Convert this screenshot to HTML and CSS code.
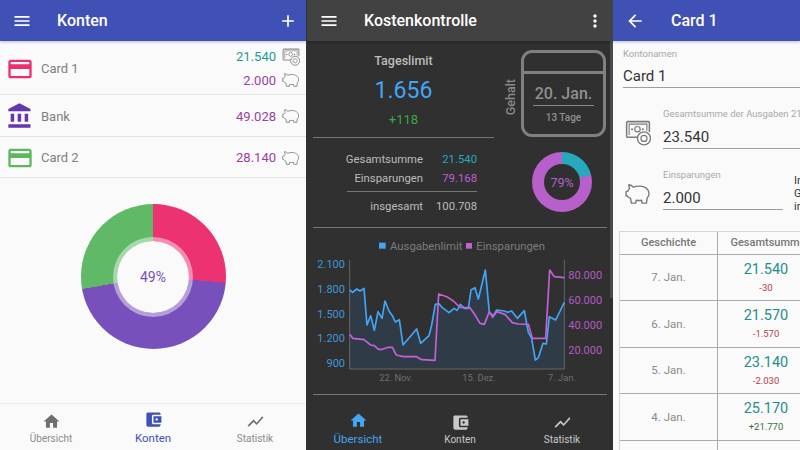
FILE: index.html
```html
<!DOCTYPE html>
<html lang="de">
<head>
  <meta charset="utf-8">
  <meta name="viewport" content="width=device-width, initial-scale=1.0">
  <title>Konten</title>
  <link rel="stylesheet" href="styles.css">
</head>
<body>
  <svg class="defs" xmlns="http://www.w3.org/2000/svg">
    <symbol id="i-menu" viewBox="0 0 24 24"><path d="M3 18h18v-2H3v2zm0-5h18v-2H3v2zm0-7v2h18V6H3z"/></symbol>
    <symbol id="i-plus" viewBox="0 0 24 24"><path d="M19 13h-6v6h-2v-6H5v-2h6V5h2v6h6v2z"/></symbol>
    <symbol id="i-more" viewBox="0 0 24 24"><path d="M12 8c1.100 0 2-.9 2-2s-.9-2-2-2-2 .9-2 2 .9 2 2 2zm0 2c-1.100 0-2 .9-2 2s.9 2 2 2 2-.9 2-2-.9-2-2-2zm0 6c-1.100 0-2 .9-2 2s.9 2 2 2 2-.9 2-2-.9-2-2-2z"/></symbol>
    <symbol id="i-back" viewBox="0 0 24 24"><path d="M20 11H7.830l5.590-5.590L12 4l-8 8 8 8 1.410-1.410L7.830 13H20v-2z"/></symbol>
    <symbol id="i-card" viewBox="0 0 24 24"><path d="M20 4H4c-1.110 0-1.990.89-1.990 2L2 18c0 1.110.89 2 2 2h16c1.110 0 2-.89 2-2V6c0-1.110-.89-2-2-2zm0 14H4v-6h16v6zm0-10H4V6h16v2z"/></symbol>
    <symbol id="i-bank" viewBox="0 0 24 24"><path d="M4 10v7h3v-7H4zm6 0v7h3v-7h-3zM2 22h19v-3H2v3zm14-12v7h3v-7h-3zm-4.500-9L2 6v2h19V6l-9.500-5z"/></symbol>
    <symbol id="i-home" viewBox="0 0 24 24"><path d="M10 20v-6h4v6h5v-8h3L12 3 2 12h3v8z"/></symbol>
    <symbol id="i-wallet" viewBox="0 0 24 24"><path d="M21 18v1c0 1.100-.9 2-2 2H5c-1.110 0-2-.9-2-2V5c0-1.100.89-2 2-2h14c1.100 0 2 .9 2 2v1h-9c-1.110 0-2 .9-2 2v8c0 1.100.89 2 2 2h9zm-9-2h10V8H12v8zm4-2.500c-.83 0-1.500-.67-1.500-1.500s.67-1.500 1.500-1.500 1.500.67 1.500 1.500-.67 1.500-1.500 1.500z"/></symbol>
    <symbol id="i-chart" viewBox="0 0 24 24"><path d="M3.500 18.490l6-6.010 4 4L22 6.920l-1.410-1.410-7.090 7.970-4-4L2 16.990z"/></symbol>
    <symbol id="i-pig" viewBox="0 0 24 20">
      <path d="M3.500 1.500c1.800.2 3.200 1 4.300 2.200C9.300 3 11 2.700 13.500 2.700c4.800 0 8.700 2.800 8.700 7 0 1.600-.7 2.900-1.700 3.800l-.7 4.900h-4l-.5-2.600c-1.700.3-3.300.3-5 0l-.5 2.600h-3.900l-.8-4.300c-1.300-.4-2.300-1.100-2.800-2.200H1V7.600h1.400c.4-1 1-1.800 1.700-2.500z" fill="none" stroke="currentColor" stroke-width="1.300" stroke-linejoin="round"/>
    </symbol>
    <symbol id="i-cash" viewBox="0 0 24 24">
      <path d="M13 16H2.500a1 1 0 0 1-1-1V2.500a1 1 0 0 1 1-1h19a1 1 0 0 1 1 1V11" fill="none" stroke="currentColor" stroke-width="1.400"/>
      <path d="M3.800 13.800V3.800h16.400V10" fill="none" stroke="currentColor" stroke-width="1"/>
      <circle cx="11.500" cy="8.500" r="2.500" fill="none" stroke="currentColor" stroke-width="1.100"/>
      <circle cx="6.500" cy="8.500" r="1" fill="currentColor"/>
      <circle cx="16.500" cy="8.500" r="1" fill="currentColor"/>
      <circle cx="17.500" cy="17" r="6" fill="#fafafa" stroke="currentColor" stroke-width="1.300"/>
      <circle cx="17.500" cy="17" r="2.800" fill="none" stroke="currentColor" stroke-width="1.100"/>
    </symbol>
  </svg>

  <div class="screens">
    <!-- Konten -->
    <section class="screen screen-accounts">
      <header class="appbar">
        <svg class="bar-icon"><use href="#i-menu"/></svg>
        <h1>Konten</h1>
        <svg class="bar-icon bar-end"><use href="#i-plus"/></svg>
      </header>
      <div class="account account-tall">
        <svg class="account-icon pink"><use href="#i-card"/></svg>
        <span class="account-name">Card 1</span>
        <div class="amounts">
          <div class="amount teal">21.540 <svg class="mini"><use href="#i-cash"/></svg></div>
          <div class="amount plum">2.000 <svg class="mini"><use href="#i-pig"/></svg></div>
        </div>
      </div>
      <div class="account">
        <svg class="account-icon violet"><use href="#i-bank"/></svg>
        <span class="account-name">Bank</span>
        <div class="amounts">
          <div class="amount plum">49.028 <svg class="mini"><use href="#i-pig"/></svg></div>
        </div>
      </div>
      <div class="account">
        <svg class="account-icon green"><use href="#i-card"/></svg>
        <span class="account-name">Card 2</span>
        <div class="amounts">
          <div class="amount plum">28.140 <svg class="mini"><use href="#i-pig"/></svg></div>
        </div>
      </div>
      <div class="donut-area">
        <div class="donut-big"><div class="donut-big-hole">49%</div></div>
      </div>
      <nav class="tabs tabs-light">
        <div class="tab"><svg><use href="#i-home"/></svg><span>Übersicht</span></div>
        <div class="tab tab-on"><svg><use href="#i-wallet"/></svg><span>Konten</span></div>
        <div class="tab"><svg><use href="#i-chart"/></svg><span>Statistik</span></div>
      </nav>
    </section>

    <!-- Kostenkontrolle -->
    <section class="screen screen-dark">
      <header class="appbar appbar-dark">
        <svg class="bar-icon"><use href="#i-menu"/></svg>
        <h1>Kostenkontrolle</h1>
        <svg class="bar-icon bar-end"><use href="#i-more"/></svg>
      </header>
      <div class="overview">
        <div class="overview-left">
          <div class="limit">
            <div class="limit-title">Tageslimit</div>
            <div class="limit-value">1.656</div>
            <div class="limit-diff">+118</div>
          </div>
          <div class="totals">
            <div class="total-row"><span>Gesamtsumme</span><b class="cyan">21.540</b></div>
            <div class="total-row"><span>Einsparungen</span><b class="orchid">79.168</b></div>
            <div class="total-row total-sum"><span>insgesamt</span><b>100.708</b></div>
          </div>
        </div>
        <div class="overview-right">
          <div class="salary">
            <span class="salary-label">Gehalt</span>
            <div class="calendar">
              <div class="calendar-top"></div>
              <div class="calendar-date">20. Jan.</div>
              <div class="calendar-days">13 Tage</div>
            </div>
          </div>
          <div class="donut-small"><div class="donut-small-hole">79%</div></div>
        </div>
      </div>
      <div class="chart-wrap">
        <svg class="chart" viewBox="6 9 918 498">
          <rect x="222" y="53" width="20" height="18" fill="#42a5f5"/>
          <text class="c-legend" x="255" y="75">Ausgabenlimit</text>
          <rect x="483" y="54" width="18" height="17" fill="#c561d6"/>
          <text class="c-legend" x="514" y="75">Einsparungen</text>

          <g class="c-left">
            <text x="120" y="130">2.100</text>
            <text x="120" y="205">1.800</text>
            <text x="120" y="279">1.500</text>
            <text x="120" y="352">1.200</text>
            <text x="120" y="426">900</text>
          </g>
          <g class="c-right">
            <text x="790" y="163">80.000</text>
            <text x="790" y="238">60.000</text>
            <text x="790" y="312">40.000</text>
            <text x="790" y="386">20.000</text>
          </g>
          <g class="c-bottom">
            <text x="273" y="469">22. Nov.</text>
            <text x="522" y="469">15. Dez.</text>
            <text x="771" y="469">7. Jan.</text>
          </g>

          <polygon class="c-area" points="134,432 134,195 143,202 155,192 165,198 177,190 186,300 197,272 208,316 219,260 231,280 240,228 252,258 262,272 271,291 283,284 294,360 335,312 347,355 372,332 380,300 391,238 402,236 412,248 432,263 447,250 456,256 466,238 478,250 490,250 498,195 510,188 520,222 541,135 553,262 565,272 575,255 598,258 608,262 620,258 637,280 658,257 670,322 680,340 691,405 700,398 714,355 724,357 733,275 752,285 778,232 778,432"/>
          <path class="c-axis" d="M134 105V432H778V105"/>
          <polyline class="c-line c-blue" points="134,195 143,202 155,192 165,198 177,190 186,300 197,272 208,316 219,260 231,280 240,228 252,258 262,272 271,291 283,284 294,360 335,312 347,355 372,332 380,300 391,238 402,236 412,248 432,263 447,250 456,256 466,238 478,250 490,250 498,195 510,188 520,222 541,135 553,262 565,272 575,255 598,258 608,262 620,258 637,280 658,257 670,322 680,340 691,405 700,398 714,355 724,357 733,275 752,285 778,232"/>
          <polyline class="c-line c-purple" points="134,328 143,340 177,344 197,360 208,362 220,373 232,373 250,367 262,367 274,390 295,395 335,395 350,404 390,406 401,207 425,215 445,228 465,247 495,248 510,270 525,295 538,298 553,260 563,277 575,260 600,268 622,293 640,297 670,298 682,340 722,340 734,135 748,155 778,158"/>
        </svg>
      </div>
      <nav class="tabs tabs-dark">
        <div class="tab tab-on"><svg><use href="#i-home"/></svg><span>Übersicht</span></div>
        <div class="tab"><svg><use href="#i-wallet"/></svg><span>Konten</span></div>
        <div class="tab"><svg><use href="#i-chart"/></svg><span>Statistik</span></div>
      </nav>
      <div class="scrollbar"></div>
    </section>

    <!-- Card 1 -->
    <section class="screen screen-detail">
      <header class="appbar">
        <svg class="bar-icon"><use href="#i-back"/></svg>
        <h1>Card 1</h1>
      </header>
      <div class="form">
        <div class="field field-name">
          <label>Kontonamen</label>
          <div class="field-value">Card 1</div>
        </div>
        <div class="form-row form-row-sum">
          <svg class="form-icon"><use href="#i-cash"/></svg>
          <div class="field field-wide">
            <label>Gesamtsumme der Ausgaben 21.540</label>
            <div class="field-value">23.540</div>
          </div>
        </div>
        <div class="form-row form-row-save">
          <svg class="form-icon"><use href="#i-pig"/></svg>
          <div class="field field-save">
            <label>Einsparungen</label>
            <div class="field-value">2.000</div>
          </div>
          <div class="form-note">In<br>Ge<br>in</div>
        </div>
      </div>
      <div class="history">
        <div class="h-head h-head-first">Geschichte</div><div class="h-head">Gesamtsumme</div>
        <div class="h-date">7. Jan.</div><div class="h-cell"><b>21.540</b><small class="neg">-30</small></div>
        <div class="h-date">6. Jan.</div><div class="h-cell"><b>21.570</b><small class="neg">-1.570</small></div>
        <div class="h-date">5. Jan.</div><div class="h-cell"><b>23.140</b><small class="neg">-2.030</small></div>
        <div class="h-date">4. Jan.</div><div class="h-cell"><b>25.170</b><small class="pos">+21.770</small></div>
        <div class="h-date"></div><div class="h-cell"></div>
      </div>
    </section>
  </div>
</body>
</html>
```

FILE: styles.css
```css
* {
  box-sizing: border-box;
  margin: 0;
  padding: 0;
}
html, body {
  width: 800px;
  height: 450px;
  overflow: hidden;
}
body {
  font-family: Roboto, "Liberation Sans", sans-serif;
  background: #333;
}
.defs {
  display: none;
}
.screens {
  display: flex;
  height: 450px;
}
.screen {
  position: relative;
  display: flex;
  flex-direction: column;
  flex: none;
  width: 306px;
  height: 450px;
  overflow: hidden;
  background: #fafafa;
}
.screen-detail {
  width: 187px;
}
.screen-dark {
  margin-left: 1px;
  background: #303030;
  color: #bdbdbd;
}

/* app bar */
.appbar {
  display: flex;
  align-items: center;
  flex: none;
  height: 41px;
  padding-left: 12px;
  background: #3f51b5;
  box-shadow: 0 1px 3px rgba(0,0,0,0.25);
  color: #fff;
  z-index: 1;
}
.appbar-dark {
  background: #424242;
}
.appbar h1 {
  margin-left: 25px;
  font-size: 16px;
  font-weight: 500;
}
.screen-detail .appbar h1 {
  margin-left: 26px;
}
.bar-icon {
  width: 20px;
  height: 20px;
  fill: #fff;
}
.bar-end {
  margin-left: auto;
  margin-right: 8px;
}

/* account list */
.account {
  display: flex;
  align-items: center;
  flex: none;
  height: 41.500px;
  padding: 2px 6px 0;
  border-bottom: 1.500px solid #e4e4e4;
}
.account-tall {
  height: 54px;
}
.account-icon {
  width: 28px;
  height: 28px;
}
.pink { fill: #ec2f6f; }
.violet { fill: #6237b0; }
.green { fill: #5cb85f; }
.account-name {
  margin-left: 7px;
  font-size: 13px;
  color: #808080;
}
.amounts {
  display: flex;
  flex-direction: column;
  gap: 5.500px;
  margin-left: auto;
}
.amount {
  display: flex;
  align-items: center;
  justify-content: flex-end;
  gap: 6px;
  height: 18px;
  font-size: 13px;
}
.teal { color: #1c9a94; }
.plum { color: #9b3fa5; }
.mini {
  width: 18px;
  height: 18px;
  color: #8c8c8c;
}

/* big donut */
.donut-area {
  display: flex;
  justify-content: center;
  flex: 1;
  padding-top: 26px;
}
.donut-big {
  display: flex;
  align-items: center;
  justify-content: center;
  width: 145px;
  height: 145px;
  border-radius: 50%;
  background: conic-gradient(#ec3270 0 95deg, #7850bb 95deg 260deg, #5fb966 260deg 360deg);
}
.donut-big-hole {
  display: flex;
  align-items: center;
  justify-content: center;
  width: 80px;
  height: 80px;
  border: 4px solid rgba(255,255,255,0.45);
  border-radius: 50%;
  background: #fafafa;
  background-clip: padding-box;
  font-size: 14px;
  color: #7850bb;
}

/* bottom tabs */
.tabs {
  display: grid;
  grid-template-columns: 1fr 1fr 1fr;
  flex: none;
  height: 47px;
  font-size: 10px;
}
.tabs-light {
  border-top: 1px solid #eee;
  color: #8a8a8a;
}
.tabs-dark {
  height: 56px;
  padding-top: 10px;
  color: #c8c8c8;
}
.tab {
  display: flex;
  flex-direction: column;
  align-items: center;
  padding-top: 8px;
}
.tab svg {
  width: 19px;
  height: 19px;
  fill: #6f6f6f;
}
.tab span {
  margin-top: 2px;
}
.tab-on {
  padding-top: 6px;
  font-size: 11.500px;
}
.tabs-light .tab-on {
  color: #3f51b5;
}
.tabs-light .tab-on svg {
  fill: #3f51b5;
}
.tabs-dark .tab svg {
  fill: #c8c8c8;
}
.tabs-dark .tab-on {
  color: #42a5f5;
}
.tabs-dark .tab-on svg {
  fill: #42a5f5;
}

/* overview */
.overview {
  display: flex;
  flex: none;
  height: 187px;
  margin: 0 6px;
  border-bottom: 1.500px solid #777;
}
.overview-left {
  width: 181px;
}
.limit {
  height: 96.500px;
  padding-top: 12px;
  border-bottom: 1.500px solid #777;
  text-align: center;
}
.limit-title {
  font-size: 12.500px;
  font-weight: 500;
}
.limit-value {
  margin-top: 9px;
  font-size: 23px;
  color: #42a5f5;
}
.limit-diff {
  margin-top: 8px;
  font-size: 13px;
  color: #3fa73f;
}
.totals {
  width: 164px;
  margin-top: 13px;
  font-size: 11.300px;
}
.total-row {
  display: flex;
  justify-content: flex-end;
  align-items: center;
  height: 18.500px;
}
.total-row span {
  margin-right: 19px;
}
.total-row b {
  width: 35px;
  font-weight: 400;
  text-align: right;
}
.total-sum {
  height: 29px;
  margin-left: 34px;
  margin-top: 3px;
  padding-top: 1px;
  border-top: 1px solid #777;
}
.total-sum span {
  margin-right: 13px;
}
.total-sum b {
  width: 41px;
}
.cyan { color: #26a9bd; }
.orchid { color: #c05fd0; }
.overview-right {
  flex: 1;
  display: flex;
  flex-direction: column;
  align-items: flex-end;
}
.salary {
  display: flex;
  align-items: center;
  margin-top: 9px;
  margin-right: 1px;
}
.salary-label {
  margin-top: 8px;
  margin-right: 3px;
  writing-mode: vertical-rl;
  transform: rotate(180deg);
  font-size: 12.500px;
  font-weight: 500;
  color: #8a8a8a;
}
.calendar {
  width: 85px;
  height: 87px;
  border: 3px solid #808080;
  border-radius: 11px;
  text-align: center;
  color: #8f8f8f;
}
.calendar-top {
  height: 21px;
  border-bottom: 3px solid #808080;
}
.calendar-date {
  height: 32px;
  margin: 0 9px;
  padding-top: 10px;
  border-bottom: 1px solid #888;
  font-size: 16px;
  font-weight: 500;
  white-space: nowrap;
}
.calendar-days {
  margin-top: 6px;
  font-size: 10px;
  font-weight: 500;
}
.donut-small {
  display: flex;
  align-items: center;
  justify-content: center;
  width: 60px;
  height: 60px;
  margin-top: 15px;
  margin-right: 15px;
  border-radius: 50%;
  background: conic-gradient(#26a9bd 0 76deg, #b75fcb 76deg 360deg);
}
.donut-small-hole {
  display: flex;
  align-items: center;
  justify-content: center;
  width: 36px;
  height: 36px;
  border-radius: 50%;
  background: #303030;
  font-size: 12.500px;
  color: #b75fcb;
}

/* chart */
.chart-wrap {
  flex: none;
  height: 166.500px;
  margin: 0 6px;
  border-bottom: 1px solid #777;
}
.chart {
  display: block;
  width: 306px;
  height: 166px;
  margin-left: -6px;
}
.chart text {
  font-family: Roboto, "Liberation Sans", sans-serif;
}
.c-legend {
  font-size: 34px;
  fill: #7d7d7d;
}
.c-left text {
  font-size: 33px;
  fill: #3f97d8;
  text-anchor: end;
}
.c-right text {
  font-size: 33px;
  fill: #b35cc4;
}
.c-bottom text {
  font-size: 28px;
  fill: #6f6f6f;
  text-anchor: middle;
}
.c-area {
  fill: #2f3c47;
}
.c-axis {
  fill: none;
  stroke: #666;
  stroke-width: 3;
}
.c-line {
  fill: none;
  stroke-width: 5;
  stroke-linejoin: round;
}
.c-blue { stroke: #42a5f5; }
.c-purple { stroke: #c561d6; }

.scrollbar {
  position: absolute;
  top: 41px;
  right: 0;
  width: 3px;
  height: 257px;
  background: #4a4a4a;
}

/* detail form */
.form {
  flex: none;
  height: 190px;
}
label {
  display: block;
  font-size: 9.500px;
  color: #a8a8a8;
  white-space: nowrap;
}
.field-value {
  border-bottom: 1.500px solid #9e9e9e;
  font-size: 15px;
  color: #333;
  white-space: nowrap;
}
.field-name {
  width: 200px;
  margin-left: 10px;
  padding-top: 7px;
}
.field-name .field-value {
  margin-top: 8px;
  padding-bottom: 2px;
}
.form-row {
  display: flex;
  align-items: center;
}
.form-row-sum {
  margin-top: 20px;
}
.form-row-save {
  margin-top: 17px;
}
.form-icon {
  flex: none;
  width: 26px;
  height: 26px;
  margin: 8px 12px 0;
  color: #7b7b7b;
}
.field-wide {
  flex: none;
  width: 190px;
}
.field-wide .field-value,
.field-save .field-value {
  margin-top: 9px;
  padding-bottom: 2px;
}
.field-save {
  flex: none;
  width: 120px;
}
.form-note {
  flex: none;
  margin-top: 8px;
  margin-left: 11px;
  font-size: 11px;
  line-height: 13px;
  color: #333;
}

/* history table */
.history {
  display: grid;
  grid-template-columns: 98px 100px;
  grid-template-rows: 22.500px;
  grid-auto-rows: 46.500px;
  width: 198px;
  margin-left: 6px;
  border-top: 1px solid #d5d5d5;
  border-left: 1px solid #d5d5d5;
}
.h-head {
  display: flex;
  align-items: center;
  justify-content: center;
  border-bottom: 1px solid #aaa;
  font-size: 11px;
  font-weight: 500;
  color: #777;
  white-space: nowrap;
}
.h-head-first {
  border-right: 1px solid #aaa;
}
.h-date {
  display: flex;
  align-items: center;
  justify-content: center;
  border-right: 1px solid #aaa;
  border-bottom: 1px solid #aaa;
  font-size: 11.500px;
  color: #8a8a8a;
}
.h-cell {
  display: flex;
  flex-direction: column;
  align-items: center;
  padding-top: 6px;
  padding-right: 4px;
  border-bottom: 1px solid #aaa;
}
.h-cell b {
  font-size: 14.500px;
  font-weight: 400;
  color: #1f8f8a;
}
.h-cell small {
  margin-top: 4px;
  font-size: 9.500px;
}
.neg { color: #b5404e; }
.pos { color: #3c6e3c; }
```
